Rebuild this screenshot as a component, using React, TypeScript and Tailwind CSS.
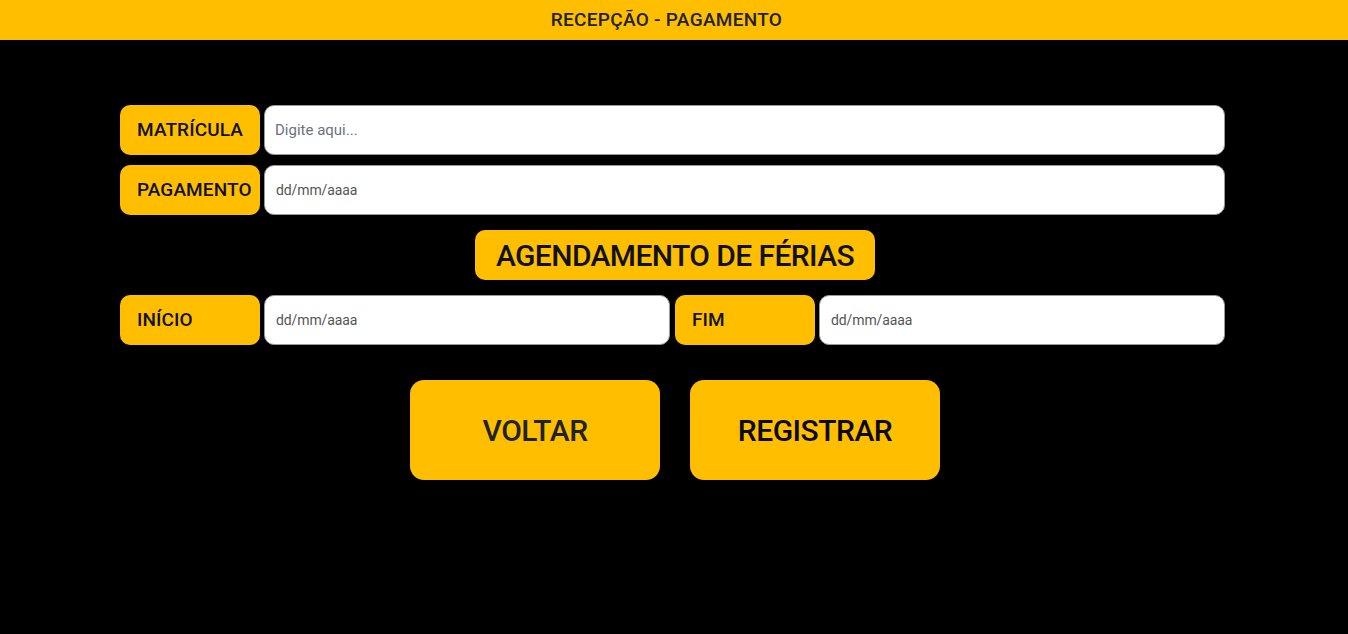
import { useState } from "react";

const font = { fontFamily: "Roboto, 'Noto Sans', sans-serif" };

function Label({ children }: { children: string }) {
  return (
    <div className="flex h-[50px] w-[140px] shrink-0 items-center rounded-[10px] bg-[#ffbf00] px-[17px] text-[19px] font-medium tracking-[0.1px] text-[#111]">
      {children}
    </div>
  );
}

function Field({ placeholder, value, onChange }: { placeholder: string; value: string; onChange: (v: string) => void }) {
  return (
    <input
      type="text"
      value={value}
      onChange={(e) => onChange(e.target.value)}
      placeholder={placeholder}
      className="h-[50px] min-w-0 flex-1 rounded-[10px] border border-[#9a9a9a] bg-white px-[11px] text-[14px] tracking-[-0.1px] text-[#333] outline-none placeholder:text-[#555]"
      style={font}
    />
  );
}

export default function App() {
  const [matricula, setMatricula] = useState("");
  const [pagamento, setPagamento] = useState("");
  const [inicio, setInicio] = useState("");
  const [fim, setFim] = useState("");

  return (
    <div className="min-h-[634px] bg-black" style={font}>
      <header className="flex h-[40px] items-center justify-center bg-[#ffbf00] pr-[15px] text-[19px] font-medium tracking-[0.3px] text-[#222]">
        RECEPÇÃO - PAGAMENTO
      </header>

      <main className="ml-[120px] flex w-[1105px] flex-col pt-[65px]">
        <div className="flex gap-[4px]">
          <Label>MATRÍCULA</Label>
          <input
            type="text"
            value={matricula}
            onChange={(e) => setMatricula(e.target.value)}
            placeholder="Digite aqui..."
            className="h-[50px] min-w-0 flex-1 rounded-[10px] border border-[#9a9a9a] bg-white px-[10px] text-[15px] text-[#333] outline-none placeholder:text-[#6b7280]"
            style={font}
          />
        </div>

        <div className="mt-[10px] flex gap-[4px]">
          <Label>PAGAMENTO</Label>
          <Field placeholder="dd/mm/aaaa" value={pagamento} onChange={setPagamento} />
        </div>

        <div className="mt-[15px] flex justify-center pl-[5px]">
          <div className="flex h-[50px] w-[400px] items-center justify-center rounded-[10px] bg-[#ffbf00] text-[30px] font-medium tracking-[-0.6px] text-[#111]">
            AGENDAMENTO DE FÉRIAS
          </div>
        </div>

        <div className="mt-[15px] flex">
          <div className="flex flex-1 gap-[4px]">
            <Label>INÍCIO</Label>
            <Field placeholder="dd/mm/aaaa" value={inicio} onChange={setInicio} />
          </div>
          <div className="ml-[5px] flex flex-1 gap-[4px]">
            <Label>FIM</Label>
            <Field placeholder="dd/mm/aaaa" value={fim} onChange={setFim} />
          </div>
        </div>

        <div className="mt-[35px] flex justify-center gap-[30px] pl-[5px]">
          <button className="h-[100px] w-[250px] rounded-[14px] bg-[#ffbf00] text-[30px] font-medium tracking-[-0.5px] text-[#1f2328]">
            VOLTAR
          </button>
          <button className="h-[100px] w-[250px] rounded-[14px] bg-[#ffbf00] text-[30px] font-medium tracking-[-0.5px] text-[#0a0a0a]">
            REGISTRAR
          </button>
        </div>
      </main>
    </div>
  );
}
